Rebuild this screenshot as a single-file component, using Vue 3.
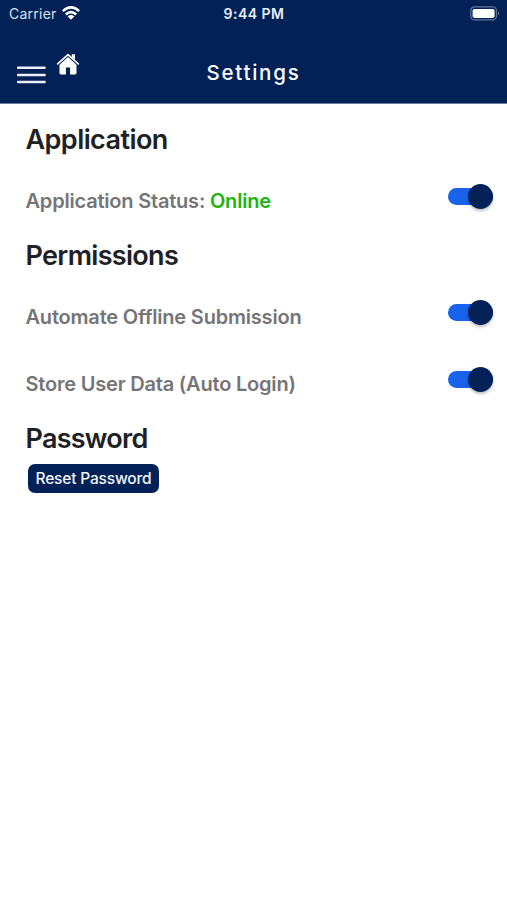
<script setup>
import { ref } from 'vue'

const online = ref(true)
const automate = ref(true)
const store = ref(true)
</script>

<template>
  <div class="screen">
    <header class="header">
      <div class="status">
        <div class="carrier">
          <span class="carrier-name">Carrier</span>
          <svg class="wifi" viewBox="0 0 18 14" width="18" height="14">
            <g fill="none" stroke="#fff" stroke-width="2.5">
              <path d="M0.8 5.1 Q9 -2.3 17.2 5.1" />
              <path d="M3.8 8.5 Q9 3.7 14.2 8.5" />
            </g>
            <path d="M5.7 10.4 Q9 7.7 12.3 10.4 L9 13.8 Z" fill="#fff" />
          </svg>
        </div>
        <span class="time">9:44 PM</span>
        <div class="power">
          <svg viewBox="0 0 31 15" width="31" height="15">
            <rect x="0.8" y="0.9" width="25.6" height="13" rx="3.6" fill="none" stroke="#60749a" stroke-width="1.2" />
            <rect x="2.6" y="2.9" width="22" height="9" rx="1.8" fill="#fff" />
            <path d="M28 5.2 Q30.3 7.4 28 9.6 Z" fill="#60749a" />
          </svg>
        </div>
      </div>
      <nav class="bar">
        <div class="actions">
          <button class="menu" aria-label="Menu">
            <svg viewBox="0 0 29 18" width="29" height="18">
              <path d="M1 1.7 H27.6 M1 8.9 H27.6 M1 16 H27.6" stroke="#e9eef8" stroke-width="2.5" stroke-linecap="round" />
            </svg>
          </button>
          <button class="home" aria-label="Home">
            <svg viewBox="0 0 24 23" width="24" height="23">
              <path d="M15.8 1.3 H19 V7 L15.8 4 Z" fill="#fff" />
              <path d="M1.7 10.9 L12 1.6 L22.3 10.9" fill="none" stroke="#fff" stroke-width="1.7" stroke-linecap="round" stroke-linejoin="round" />
              <path d="M12 4.1 L20.5 11.7 V20 Q20.5 21.4 19.1 21.4 H14.1 V14.4 H9.9 V21.4 H4.9 Q3.5 21.4 3.5 20 V11.7 Z" fill="#fff" />
            </svg>
          </button>
        </div>
        <h1 class="title">Settings</h1>
      </nav>
    </header>

    <main class="content">
      <h2 class="application">Application</h2>
      <label class="row">
        <span class="label">Application Status: <b>Online</b></span>
        <input v-model="online" type="checkbox" class="switch" />
      </label>
      <h2 class="permissions">Permissions</h2>
      <label class="row">
        <span class="label">Automate Offline Submission</span>
        <input v-model="automate" type="checkbox" class="switch" />
      </label>
      <label class="row">
        <span class="label">Store User Data (Auto Login)</span>
        <input v-model="store" type="checkbox" class="switch" />
      </label>
      <h2 class="password">Password</h2>
      <button class="reset"><span>Reset Password</span></button>
    </main>
  </div>
</template>

<style>
body {
  margin: 0;
  background: #fff;
}
</style>

<style scoped>
.screen {
  width: 507px;
  height: 900px;
  background: #fff;
  font-family: Inter, "Liberation Sans", sans-serif;
}
button {
  border: 0;
  padding: 0;
  background: none;
  font: inherit;
}
.header {
  box-sizing: border-box;
  height: 104px;
  background: #022257;
  border-bottom: 1px solid #6b7d9d;
  color: #fff;
}
.status {
  display: grid;
  grid-template-columns: 1fr auto 1fr;
  align-items: center;
  height: 27px;
  padding: 0 6px 0 9px;
}
.carrier {
  display: flex;
  align-items: center;
  gap: 5px;
}
.carrier-name {
  font-size: 14px;
  letter-spacing: 0.25px;
  color: #d9e0ee;
}
.wifi {
  margin-bottom: 1px;
}
.time {
  font-size: 14px;
  font-weight: 600;
  letter-spacing: 0.5px;
  margin-right: 2px;
  color: #e8edf7;
}
.power {
  display: flex;
  justify-content: flex-end;
}
.bar {
  display: grid;
  grid-template-columns: 1fr auto 1fr;
  height: 76px;
}
.actions {
  display: flex;
  align-items: flex-start;
  gap: 10px;
  padding-left: 17px;
}
.menu {
  display: flex;
  margin-top: 39px;
}
.home {
  display: flex;
  margin-top: 26px;
}
.title {
  margin: 34px 0 0;
  font-size: 20.5px;
  font-weight: 500;
  line-height: 24px;
  letter-spacing: 1.75px;
}
.content {
  display: flex;
  flex-direction: column;
  align-items: stretch;
  padding: 14.5px 14.5px 0 25.5px;
}
h2 {
  margin: 5.5px 0 11.5px;
  font-size: 27px;
  font-weight: 600;
  line-height: 32px;
  letter-spacing: -0.57px;
  color: #202124;
}
.permissions {
  letter-spacing: -0.68px;
}
.row {
  display: flex;
  align-items: center;
  justify-content: space-between;
  height: 67px;
}
.label {
  font-size: 20px;
  font-weight: 600;
  line-height: 24px;
  letter-spacing: -0.2px;
  color: #757577;
  white-space: nowrap;
}
.label b {
  font-weight: 600;
  color: #1cb50e;
}
.switch {
  appearance: none;
  display: flex;
  align-items: center;
  justify-content: flex-end;
  width: 44.5px;
  height: 17px;
  margin: 0 0 9px;
  border-radius: 9px;
  background: #1763ec;
}
.switch::before {
  content: "";
  width: 25px;
  height: 25px;
  flex: none;
  border-radius: 50%;
  background: #022257;
  box-shadow: 0 2px 3px rgba(0, 0, 0, 0.25);
}
.switch:not(:checked) {
  justify-content: flex-start;
  background: #bbb;
}
.password {
  margin-bottom: 9px;
  letter-spacing: -0.75px;
}
.reset {
  display: flex;
  align-items: center;
  justify-content: center;
  width: 131px;
  height: 29px;
  margin-left: 2.5px;
  border-radius: 7px;
  background: #022257;
  color: #f3f6fc;
  font-size: 15.5px;
  font-weight: 500;
  letter-spacing: -0.18px;
}
</style>
